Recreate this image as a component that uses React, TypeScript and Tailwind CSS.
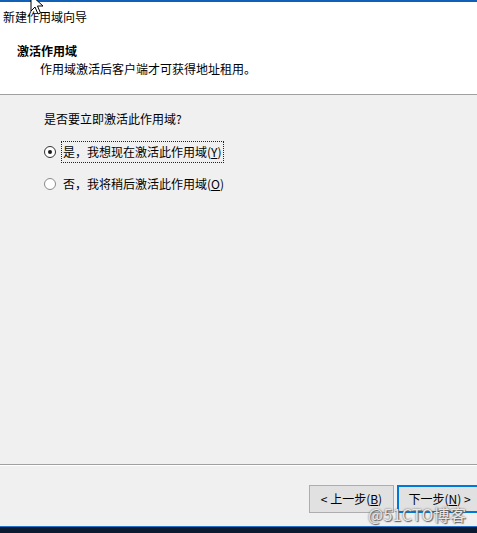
import React from "react";

function Radio({ checked }: { checked?: boolean }) {
  return (
    <span
      className={
        "flex h-[12px] w-[12px] shrink-0 items-center justify-center rounded-full border bg-white " +
        (checked ? "border-[#333333]" : "border-[#8a8a8a]")
      }
    >
      {checked && <span className="h-[4px] w-[4px] rounded-full bg-[#1a1a1a]" />}
    </span>
  );
}

export default function App() {
  return (
    <div
      className="relative flex h-[533px] w-[477px] flex-col overflow-hidden bg-[#f0f0f0] text-[12px] leading-[16px] text-black"
      style={{ fontFamily: '"Noto Sans CJK SC", "Noto Sans", sans-serif' }}
    >
      <div className="h-[2px] bg-[#1160b8]" />

      {/* header */}
      <div className="flex h-[92px] flex-col bg-white">
        <div className="mt-[7px] pl-[3px]">新建作用域向导</div>
        <div className="mt-[18px] pl-[17px] font-bold">激活作用域</div>
        <div className="mt-[2px] pl-[40px]">作用域激活后客户端才可获得地址租用。</div>
      </div>
      <div className="h-px bg-[#a0a0a0]" />

      {/* body */}
      <div className="flex flex-1 flex-col pl-[44px]">
        <div className="mt-[16px]">是否要立即激活此作用域?</div>
        <div className="mt-[14px] flex items-center">
          <Radio checked />
          <span className="ml-[5px] border border-dotted border-[#222] px-[1px] py-[2px]">
            是，我想现在激活此作用域(<span className="underline">Y</span>)
          </span>
        </div>
        <div className="mt-[11px] flex items-center">
          <Radio />
          <span className="ml-[6px] px-[1px] py-[2px]">
            否，我将稍后激活此作用域(<span className="underline">O</span>)
          </span>
        </div>
      </div>

      <div className="h-px bg-[#a0a0a0]" />
      <div className="h-px bg-white" />

      {/* footer */}
      <div className="flex h-[60px] items-start justify-end gap-[3px] pt-[19px] pr-0">
        <button className="flex h-[28px] w-[85px] shrink-0 items-center justify-center border border-[#adadad] bg-[#e1e1e1] text-[12px]">
          &lt; 上一步(<span className="underline">B</span>)
        </button>
        <button className="mr-[-5px] flex h-[28px] w-[85px] shrink-0 items-center justify-center border-2 border-[#0078d7] bg-[#e1e1e1] text-[12px]">
          下一步(<span className="underline">N</span>) &gt;
        </button>
      </div>

      <div className="h-px bg-[#1f74c9]" />
      <div className="h-[6px] bg-[#0b1a30]" />

      {/* watermark */}
      <div
        className="absolute left-[368px] top-[504px] text-[16px] leading-[20px] tracking-[0.3px] text-[#e8e8e8]"
        style={{ textShadow: "0 0 2px #555, 1px 1px 1px #666" }}
      >
        @51CTO博客
      </div>

      {/* cursor */}
      <svg className="absolute left-[30px] top-[-6px]" width="16" height="22" viewBox="0 0 16 22">
        <path d="M1 1 L1 17 L5 13 L8 20 L10.5 19 L7.5 12 L13 12 Z" fill="white" stroke="black" strokeWidth="1" />
      </svg>
    </div>
  );
}
